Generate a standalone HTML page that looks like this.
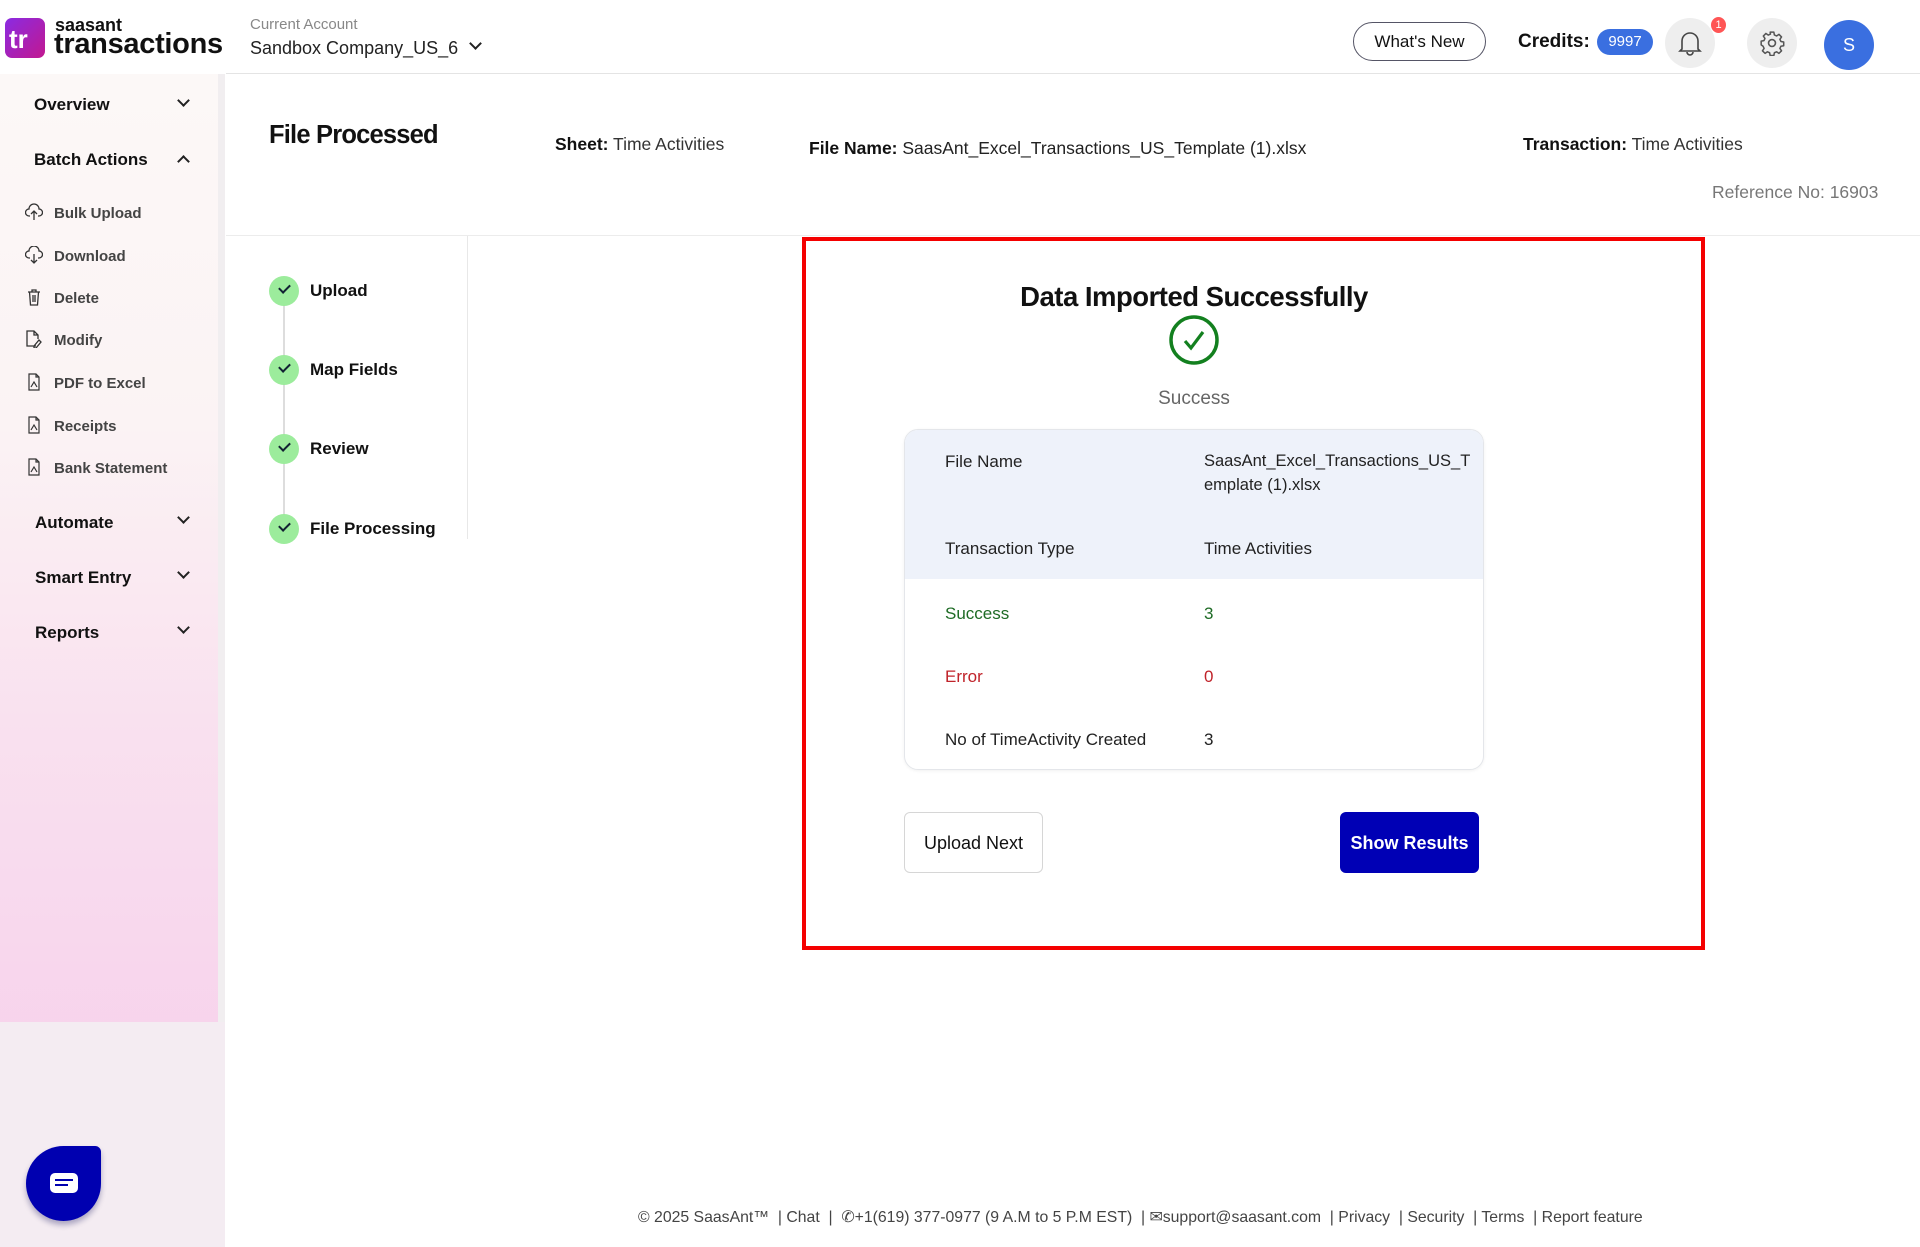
<!DOCTYPE html>
<html><head><meta charset="utf-8"><style>
*{box-sizing:border-box;margin:0;padding:0}
body{width:1920px;height:1247px;position:relative;overflow:hidden;background:#fff;font-family:"Liberation Sans",sans-serif;color:#111}
.a{position:absolute;white-space:nowrap}
.side{position:absolute;left:0;top:74px;width:220px;height:1173px;background:linear-gradient(180deg,#fcf8f7 0%,#fbf3f4 30%,#f9e1ef 55%,#f7d2ec 85%);}
.sideb{position:absolute;left:0;top:1022px;width:225px;height:225px;background:#f4ecf2}
.sec{font-size:17px;font-weight:bold;color:#111}
.sub{font-size:15px;font-weight:bold;color:#444}
.chev{position:absolute;width:9px;height:9px;border-right:2px solid #222;border-bottom:2px solid #222;transform:rotate(45deg)}
.chevu{transform:rotate(-135deg)}
.step{position:absolute;left:269px;width:30px;height:30px;border-radius:50%;background:#9cec9c}
.step:after{content:"";position:absolute;left:10px;top:8px;width:9px;height:5px;border-left:2px solid #123;border-bottom:2px solid #123;transform:rotate(-45deg)}
.stxt{position:absolute;left:310px;font-size:17px;font-weight:bold;color:#111}
.lbl{position:absolute;left:945px;font-size:17px;color:#222}
.val{position:absolute;left:1204px;font-size:17px;color:#222}
.ic{position:absolute;left:25px;width:18px;height:18px}
</style></head><body>
<svg class="a" style="left:5px;top:18px" width="40" height="40" viewBox="0 0 40 40"><defs><linearGradient id="g" x1="0" y1="0" x2="1" y2="1"><stop offset="0" stop-color="#8a2be2"/><stop offset="1" stop-color="#c2188f"/></linearGradient></defs><rect width="40" height="40" rx="7" fill="url(#g)"/><text x="4" y="30" font-family="Liberation Sans" font-weight="bold" font-size="26" fill="#fff">tr</text></svg>
<div class="a" style="left:55px;top:15px;font-size:18px;font-weight:bold;color:#111">saasant</div>
<div class="a" style="left:54px;top:28px;font-size:29px;font-weight:bold;color:#111;letter-spacing:-0.3px">transactions</div>
<div class="a" style="left:250px;top:16px;font-size:15px;color:#888">Current Account</div>
<div class="a" style="left:250px;top:38px;font-size:18px;color:#222">Sandbox Company_US_6</div>
<div class="chev" style="left:471px;top:39px"></div>
<div class="a" style="left:226px;top:73px;width:1694px;height:1px;background:#e4e4e4"></div>
<div class="a" style="left:1353px;top:22px;width:133px;height:39px;border:1px solid #556;border-radius:20px;font-size:17px;text-align:center;line-height:37px;color:#111">What's New</div>
<div class="a" style="left:1518px;top:31px;font-size:19px;font-weight:bold">Credits:</div>
<div class="a" style="left:1597px;top:29px;width:56px;height:26px;border-radius:13px;background:#3a6fe0;color:#fff;font-size:15px;text-align:center;line-height:26px">9997</div>
<div class="a" style="left:1665px;top:18px;width:50px;height:50px;border-radius:50%;background:#eee"></div>
<svg class="a" style="left:1677px;top:29px" width="26" height="28" viewBox="0 0 26 28"><path d="M5 20V12a8 8 0 0 1 16 0v8l2 2H3z M10 23a3 3 0 0 0 6 0" fill="none" stroke="#444" stroke-width="1.6"/></svg>
<div class="a" style="left:1711px;top:17px;width:15px;height:16px;border-radius:50%;background:#f55;color:#fff;font-size:11px;text-align:center;line-height:16px">1</div>
<div class="a" style="left:1747px;top:18px;width:50px;height:50px;border-radius:50%;background:#eee"></div>
<svg class="a" style="left:1759px;top:30px" width="26" height="26" viewBox="0 0 24 24"><circle cx="12" cy="12" r="3.2" fill="none" stroke="#555" stroke-width="1.5"/><path d="M10.3 2h3.4l.5 2.6 2 .9 2.2-1.5 2.4 2.4-1.5 2.2.9 2 2.6.5v3.4l-2.6.5-.9 2 1.5 2.2-2.4 2.4-2.2-1.5-2 .9-.5 2.6h-3.4l-.5-2.6-2-.9-2.2 1.5-2.4-2.4 1.5-2.2-.9-2L2 13.7v-3.4l2.6-.5.9-2L4 5.6 6.4 3.2l2.2 1.5 2-.9z" fill="none" stroke="#555" stroke-width="1.4" stroke-linejoin="round"/></svg>
<div class="a" style="left:1824px;top:20px;width:50px;height:50px;border-radius:50%;background:#3a6fe0;color:#fff;font-size:18px;text-align:center;line-height:50px">S</div>
<div class="side"></div><div class="sideb"></div>
<div class="a" style="left:218px;top:74px;width:7px;height:948px;background:#f1eef0"></div>
<div class="a sec" style="left:34px;top:95px">Overview</div><div class="chev" style="left:179px;top:96px"></div>
<div class="a sec" style="left:34px;top:150px">Batch Actions</div><div class="chev chevu" style="left:179px;top:157px"></div>
<svg class="ic" style="top:203px" viewBox="0 0 18 18"><path d="M5 13H4a3.5 3.5 0 0 1 0-7 5 5 0 0 1 10 0 3.5 3.5 0 0 1 0 7h-1M9 17V8M6 11l3-3 3 3" fill="none" stroke="#333" stroke-width="1.3"/></svg>
<div class="a sub" style="left:54px;top:205px">Bulk Upload</div>
<svg class="ic" style="top:246px" viewBox="0 0 18 18"><path d="M5 12H4a3.5 3.5 0 0 1 0-7 5 5 0 0 1 10 0 3.5 3.5 0 0 1 0 7h-1M9 8v9M6 14l3 3 3-3" fill="none" stroke="#333" stroke-width="1.3"/></svg>
<div class="a sub" style="left:54px;top:248px">Download</div>
<svg class="ic" style="top:288px" viewBox="0 0 18 18"><path d="M3 4h12M7 4V2h4v2M4.5 4l1 13h7l1-13M8 7v7M10 7v7" fill="none" stroke="#333" stroke-width="1.3"/></svg>
<div class="a sub" style="left:54px;top:290px">Delete</div>
<svg class="ic" style="top:330px" viewBox="0 0 18 18"><path d="M11 16H2V1h7l4 4v4M9 1v4h4M9 16l5-6 2 2-5 6H9z" fill="none" stroke="#333" stroke-width="1.3"/></svg>
<div class="a sub" style="left:54px;top:332px">Modify</div>
<svg class="ic" style="top:373px" viewBox="0 0 18 18"><path d="M14 17H4V1h7l3 3zM11 1v3h3M6 14l3-5 3 5" fill="none" stroke="#333" stroke-width="1.2"/></svg>
<div class="a sub" style="left:54px;top:375px">PDF to Excel</div>
<svg class="ic" style="top:416px" viewBox="0 0 18 18"><path d="M14 17H4V1h7l3 3zM11 1v3h3M6 14l3-5 3 5" fill="none" stroke="#333" stroke-width="1.2"/></svg>
<div class="a sub" style="left:54px;top:418px">Receipts</div>
<svg class="ic" style="top:458px" viewBox="0 0 18 18"><path d="M14 17H4V1h7l3 3zM11 1v3h3M6 14l3-5 3 5" fill="none" stroke="#333" stroke-width="1.2"/></svg>
<div class="a sub" style="left:54px;top:460px">Bank Statement</div>
<div class="a sec" style="left:35px;top:513px">Automate</div><div class="chev" style="left:179px;top:513px"></div>
<div class="a sec" style="left:35px;top:568px">Smart Entry</div><div class="chev" style="left:179px;top:568px"></div>
<div class="a sec" style="left:35px;top:623px">Reports</div><div class="chev" style="left:179px;top:623px"></div>
<div class="a" style="left:26px;top:1146px;width:75px;height:75px;background:#0000b0;border-radius:38px 6px 38px 38px;box-shadow:0 4px 6px rgba(0,0,80,.3)"></div>
<div class="a" style="left:50px;top:1173px;width:28px;height:20px;background:#fff;border-radius:5px"></div>
<div class="a" style="left:55px;top:1179px;width:18px;height:2px;background:#0000b0"></div>
<div class="a" style="left:55px;top:1184px;width:13px;height:2px;background:#0000b0"></div>
<div class="a" style="left:269px;top:121px;font-size:25.5px;font-weight:bold;letter-spacing:-0.8px">File Processed</div>
<div class="a" style="left:555px;top:134px;font-size:17.5px;color:#333"><b style="color:#111">Sheet:</b> Time Activities</div>
<div class="a" style="left:809px;top:138px;font-size:17.5px;color:#222"><b style="color:#111">File Name:</b> SaasAnt_Excel_Transactions_US_Template (1).xlsx</div>
<div class="a" style="left:1523px;top:134px;font-size:17.5px;color:#333"><b style="color:#111">Transaction:</b> Time Activities</div>
<div class="a" style="left:1712px;top:182px;font-size:17.5px;color:#777">Reference No: 16903</div>
<div class="a" style="left:226px;top:235px;width:1694px;height:1px;background:#ececec"></div>
<div class="a" style="left:467px;top:236px;width:1px;height:303px;background:#e8e8e8"></div>
<div class="a" style="left:283px;top:300px;width:2px;height:230px;background:#ddd"></div>
<div class="step" style="top:276px"></div><div class="stxt" style="top:281px">Upload</div>
<div class="step" style="top:355px"></div><div class="stxt" style="top:360px">Map Fields</div>
<div class="step" style="top:434px"></div><div class="stxt" style="top:439px">Review</div>
<div class="step" style="top:514px"></div><div class="stxt" style="top:519px">File Processing</div>
<div class="a" style="left:802px;top:237px;width:903px;height:713px;border:4px solid #f40000"></div>
<div class="a" style="left:994px;top:281px;width:400px;text-align:center;font-size:27.5px;font-weight:bold;letter-spacing:-0.5px">Data Imported Successfully</div>
<svg class="a" style="left:1168px;top:314px" width="52" height="52" viewBox="0 0 52 52"><circle cx="26" cy="26" r="23" fill="none" stroke="#13801f" stroke-width="3.5"/><path d="M17 27l6 7 12-16" fill="none" stroke="#13801f" stroke-width="3.2"/></svg>
<div class="a" style="left:1094px;top:388px;width:200px;text-align:center;font-size:19px;color:#666">Success</div>
<div class="a" style="left:904px;top:429px;width:580px;height:341px;border:1px solid #e4e6ea;border-radius:14px;overflow:hidden;box-shadow:0 1px 3px rgba(0,0,0,.06)"><div style="height:149px;background:#eef2fa"></div></div>
<div class="lbl" style="top:452px">File Name</div>
<div class="val" style="top:452px;font-size:16.5px">SaasAnt_Excel_Transactions_US_T</div>
<div class="val" style="top:476px;font-size:16.5px">emplate (1).xlsx</div>
<div class="lbl" style="top:539px">Transaction Type</div><div class="val" style="top:539px">Time Activities</div>
<div class="lbl" style="top:604px;color:#1e6b25">Success</div><div class="val" style="top:604px;color:#1e6b25">3</div>
<div class="lbl" style="top:667px;color:#c0232a">Error</div><div class="val" style="top:667px;color:#c0232a">0</div>
<div class="lbl" style="top:730px">No of TimeActivity Created</div><div class="val" style="top:730px">3</div>
<div class="a" style="left:904px;top:812px;width:139px;height:61px;border:1px solid #d6d6d6;border-radius:6px;font-size:18px;text-align:center;line-height:61px;color:#111">Upload Next</div>
<div class="a" style="left:1340px;top:812px;width:139px;height:61px;background:#0000b5;border-radius:6px;font-size:18px;font-weight:bold;text-align:center;line-height:63px;color:#fff">Show Results</div>
<div class="a" style="left:638px;top:1207px;font-size:15.8px;color:#444">© 2025 SaasAnt™ &nbsp;| Chat &nbsp;| &nbsp;✆+1(619) 377-0977 (9 A.M to 5 P.M EST) &nbsp;| ✉support@saasant.com &nbsp;| Privacy &nbsp;| Security &nbsp;| Terms &nbsp;| Report feature</div>
</body></html>
